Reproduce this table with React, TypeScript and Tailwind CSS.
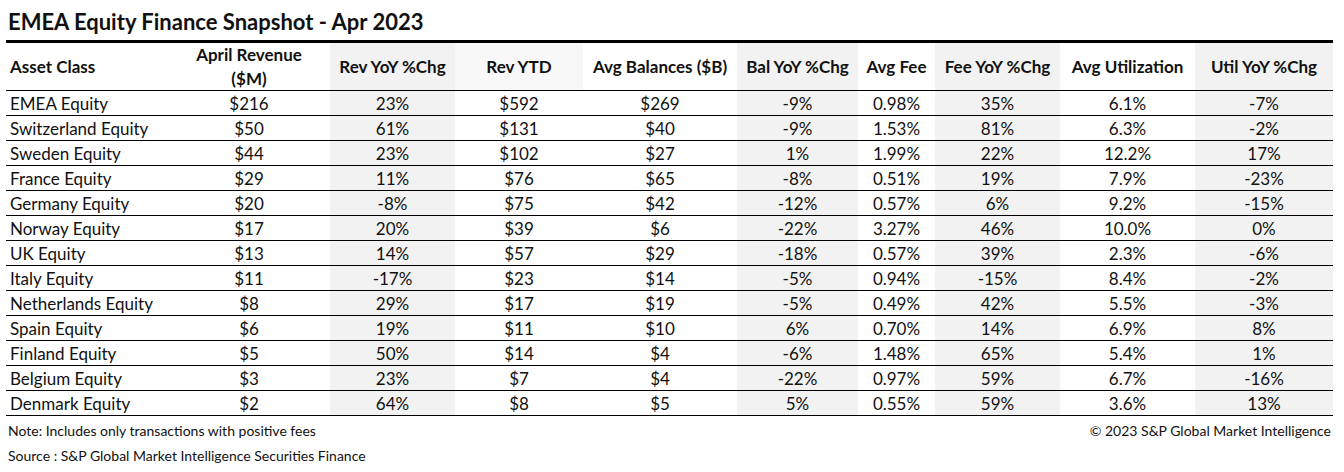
const COLS = [
  { label: 'Asset Class', w: 'w-[162px]', shade: false },
  { label: 'April Revenue ($M)', w: 'w-[162px]', shade: false },
  { label: 'Rev YoY %Chg', w: 'w-[125px]', shade: true },
  { label: 'Rev YTD', w: 'w-[128px]', shade: false },
  { label: 'Avg Balances ($B)', w: 'w-[154px]', shade: false },
  { label: 'Bal YoY %Chg', w: 'w-[121px]', shade: true },
  { label: 'Avg Fee', w: 'w-[77px]', shade: false },
  { label: 'Fee YoY %Chg', w: 'w-[125px]', shade: true },
  { label: 'Avg Utilization', w: 'w-[135px]', shade: false },
  { label: 'Util YoY %Chg', w: 'w-[138px]', shade: true },
];

const ROWS = [
  ['EMEA Equity', '$216', '23%', '$592', '$269', '-9%', '0.98%', '35%', '6.1%', '-7%'],
  ['Switzerland Equity', '$50', '61%', '$131', '$40', '-9%', '1.53%', '81%', '6.3%', '-2%'],
  ['Sweden Equity', '$44', '23%', '$102', '$27', '1%', '1.99%', '22%', '12.2%', '17%'],
  ['France Equity', '$29', '11%', '$76', '$65', '-8%', '0.51%', '19%', '7.9%', '-23%'],
  ['Germany Equity', '$20', '-8%', '$75', '$42', '-12%', '0.57%', '6%', '9.2%', '-15%'],
  ['Norway Equity', '$17', '20%', '$39', '$6', '-22%', '3.27%', '46%', '10.0%', '0%'],
  ['UK Equity', '$13', '14%', '$57', '$29', '-18%', '0.57%', '39%', '2.3%', '-6%'],
  ['Italy Equity', '$11', '-17%', '$23', '$14', '-5%', '0.94%', '-15%', '8.4%', '-2%'],
  ['Netherlands Equity', '$8', '29%', '$17', '$19', '-5%', '0.49%', '42%', '5.5%', '-3%'],
  ['Spain Equity', '$6', '19%', '$11', '$10', '6%', '0.70%', '14%', '6.9%', '8%'],
  ['Finland Equity', '$5', '50%', '$14', '$4', '-6%', '1.48%', '65%', '5.4%', '1%'],
  ['Belgium Equity', '$3', '23%', '$7', '$4', '-22%', '0.97%', '59%', '6.7%', '-16%'],
  ['Denmark Equity', '$2', '64%', '$8', '$5', '5%', '0.55%', '59%', '3.6%', '13%'],
];

export default function App() {
  return (
    <div className="h-[472px] w-[1344px] bg-white text-[#111] font-['Lato','Liberation_Sans',sans-serif]">
      <div className="ml-[6px] w-[1327px]">
        <h1 className="pt-[8px] pl-[2px] text-[22px] font-bold leading-[28px]">
          EMEA Equity Finance Snapshot - Apr 2023
        </h1>

        <div className="mt-[4px] border-t-[3px] border-black">
          <div className="flex h-[48px] border-b border-black text-[17px] font-bold leading-[24px]">
            {COLS.map((c, i) => (
              <div
                key={c.label}
                className={`${c.w} flex items-center ${i === 0 ? 'justify-start pl-[4px]' : 'justify-center text-center'} ${c.shade ? 'bg-[#f2f2f2]' : i === 3 ? 'bg-[#f8f8f8]' : ''}`}
              >
                {i === 1 ? (
                  <span>April Revenue<br />($M)</span>
                ) : (
                  c.label
                )}
              </div>
            ))}
          </div>

          {ROWS.map((row) => (
            <div key={row[0]} className="flex h-[25px] border-b border-black text-[17px] leading-[25px]">
              {row.map((v, i) => (
                <div
                  key={i}
                  className={`${COLS[i].w} ${i === 0 ? 'pl-[4px] text-left' : 'text-center'} ${COLS[i].shade ? 'bg-[#f2f2f2]' : ''}`}
                >
                  {v}
                </div>
              ))}
            </div>
          ))}
        </div>

        <div className="mt-[4px] flex h-[20px] items-center justify-between pl-[2px] text-[14px]">
          <span>Note: Includes only transactions with positive fees</span>
          <span className="pr-[2px]">© 2023 S&amp;P Global Market Intelligence</span>
        </div>
        <div className="mt-[5px] flex h-[20px] items-center pl-[2px] text-[14px]">
          Source : S&amp;P Global Market Intelligence Securities Finance
        </div>
      </div>
    </div>
  );
}
